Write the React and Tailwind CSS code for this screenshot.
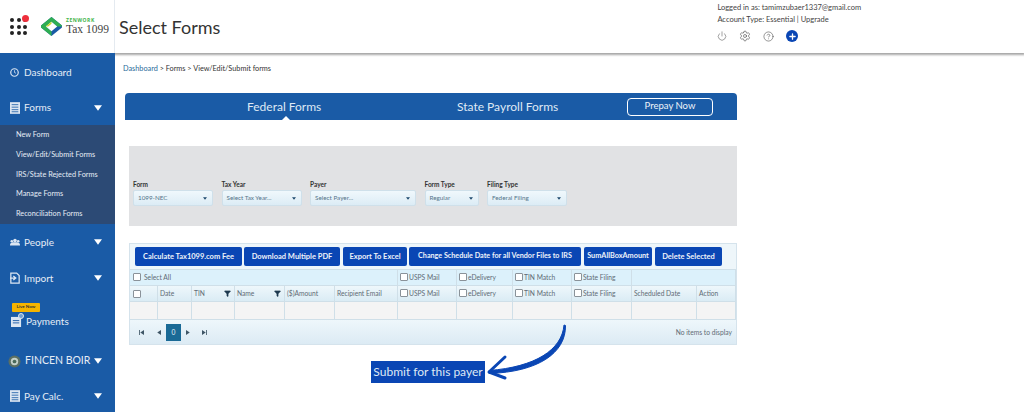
import React from "react";
import { Power, Settings, CircleHelp, Plus, Filter } from "lucide-react";

const Caret = ({ className = "" }) => (
  <svg viewBox="0 0 12 8" className={className}><path d="M0 0h12L6 8z" fill="currentColor" /></svg>
);

const Logo = () => (
  <div className="flex items-center gap-[4px] ml-[14px]">
    <svg viewBox="0 0 22 20" className="w-[21px] h-[19px]">
      <path d="M11 0 22 9v2L11 20 0 11V9z" fill="#1a5ba6" />
      <path d="M11 0 22 9v1l-5 0-6-5-6 5 6 5v5L0 11V9z" fill="#2fae52" />
      <path d="M5 10l6-5v3.500L8 10z" fill="#c6d82e" />
      <path d="M11 5l6 5-6 5-6-5z" fill="#fff" />
      <path d="M5 10l6-5v2l-3.500 3z" fill="#c6d82e" />
    </svg>
    <div className="flex flex-col leading-none">
      <span className="text-[5px] font-bold tracking-[0.5px] text-[#3fb54a] font-['Open_Sans',sans-serif] whitespace-nowrap">ZENWORK</span>
      <span className="text-[11.5px] text-[#444] font-['Liberation_Serif',serif] mt-[1px] whitespace-nowrap">Tax 1099</span>
    </div>
  </div>
);

const DocIcon = () => (
  <svg viewBox="0 0 12 14" className="w-[10px] h-[12px]">
    <path d="M0 0h12v14H0z" fill="#dce6f2" />
    <path d="M2 3h8M2 6h8M2 9h8M2 11.500h8" stroke="#1a5ba6" strokeWidth="1" />
  </svg>
);

const Item = ({ h, icon, label, caret, top }) => (
  <div className={`relative flex items-center pl-[10px] shrink-0 text-[#e6edf6] text-[10px] ${h}`}>
    {top}
    <span className="w-[14px] flex justify-start shrink-0">{icon}</span>
    <span className="whitespace-nowrap">{label}</span>
    {caret && <Caret className="w-[8px] h-[6px] text-white ml-auto mr-[13px]" />}
  </div>
);

const Check = ({ label, wide }) => (
  <span className="flex items-center whitespace-nowrap">
    <span className="w-[8px] h-[8px] bg-white border border-[#8a9299] rounded-[1px] shrink-0" />
    {label && <span className={wide ? "ml-[3px]" : "ml-[1px]"}>{label}</span>}
  </span>
);

const Field = ({ label, value, w }) => (
  <div className={`flex flex-col ${w}`}>
    <span className="text-[6.5px] font-bold text-[#333] leading-[9px] mb-[1px]">{label}</span>
    <div className="h-[16px] rounded-[2px] border border-[#cfe0ea] bg-gradient-to-b from-[#f0f8fc] to-[#dcecf5] flex items-center justify-between pl-[4px] pr-[5px] text-[6.3px] text-[#55758a]">
      <span className="whitespace-nowrap">{value}</span>
      <Caret className="w-[4px] h-[3px] text-[#1f4a6e]" />
    </div>
  </div>
);

const cols = "grid grid-cols-[28px_34px_43px_50px_50px_63px_59px_56px_59px_60px_65px_39px]";

const Btn = ({ w, children }) => (
  <div className={`h-[19px] ${w} bg-[#0a46b4] rounded-[2px] flex items-center justify-center text-[#eef3fa] font-bold whitespace-nowrap shrink-0`}>{children}</div>
);

const Cell = ({ children, span = "", cls = "" }) => (
  <div className={`border-r border-b border-[#cfdfe8] flex items-center px-[2px] min-w-0 ${span} ${cls}`}>{children}</div>
);

const Submenu = ["New Form", "View/Edit/Submit Forms", "IRS/State Rejected Forms", "Manage Forms", "Reconciliation Forms"];

const Pg = ({ d, cls }) => (
  <svg viewBox="0 0 6 6" className={`w-[5px] h-[5px] shrink-0 ${cls}`}><path d={d} fill="#3f5666" /></svg>
);

export default function App() {
  return (
    <div className="relative w-[1024px] h-[412px] overflow-hidden bg-white flex flex-col font-['Lato','Open_Sans',sans-serif]">
      <header className="relative h-[53px] shrink-0 flex bg-white shadow-[0_1px_2px_1px_rgba(0,0,0,0.35)]">
        <div className="w-[115px] shrink-0 flex items-center border-r border-[#e4eaf0] pl-[10px]">
          <div className="relative grid grid-cols-3 gap-[2.5px] w-[17px]">
            {Array.from({ length: 9 }).map((_, i) => (
              <span key={i} className="w-[4px] h-[4px] rounded-full bg-[#222]" />
            ))}
            <span className="absolute -top-[3px] -right-[2px] w-[7px] h-[7px] rounded-full bg-[#ee2f3c]" />
          </div>
          <Logo />
        </div>
        <h1 className="ml-[4px] mt-[16px] text-[18px] leading-[22px] text-[#333]">Select Forms</h1>
        <div className="ml-[497px] pt-[2px] text-[#444] text-[7.5px] leading-[12px]">
          <div className="whitespace-nowrap">Logged in as: tamimzubaer1337@gmail.com</div>
          <div className="whitespace-nowrap">Account Type: Essential | Upgrade</div>
          <div className="flex items-center gap-[12px] mt-[4px] text-[#444]">
            <Power size={10} strokeWidth={1.2} />
            <Settings size={12} strokeWidth={1.2} />
            <CircleHelp size={11} strokeWidth={1.2} />
            <span className="w-[12px] h-[12px] rounded-full bg-[#0a46b4] flex items-center justify-center">
              <Plus size={9} strokeWidth={3.5} className="text-white" />
            </span>
          </div>
        </div>
      </header>

      <div className="flex flex-1 min-h-0">
        <aside className="relative z-10 w-[115px] shrink-0 bg-[#1a5ba6] flex flex-col">
          <Item h="h-[37px] pt-[1px]" label="Dashboard" icon={
            <svg viewBox="0 0 12 12" className="w-[9px] h-[9px]"><circle cx="6" cy="6" r="5" fill="none" stroke="#dce6f2" strokeWidth="1.600" /><path d="M6 3v3l2 1" stroke="#dce6f2" fill="none" /></svg>
          } />
          <Item h="h-[35px]" label="Forms" caret icon={<DocIcon />} />
          <nav className="h-[99px] shrink-0 bg-[#2c4a75] flex flex-col justify-center pt-[1px] pl-[16px] text-[#e6edf6] text-[7.3px]">
            {Submenu.map((s) => (
              <div key={s} className="h-[19.6px] flex items-center whitespace-nowrap">{s}</div>
            ))}
          </nav>
          <Item h="h-[36px]" label="People" caret icon={
            <svg viewBox="0 0 14 10" className="w-[10px] h-[8px]"><circle cx="7" cy="3" r="2.500" fill="#dce6f2" /><circle cx="2.500" cy="4" r="1.800" fill="#dce6f2" /><circle cx="11.500" cy="4" r="1.800" fill="#dce6f2" /><path d="M0 9c0-3 3-3.500 7-3.500s7 .5 7 3.500v1H0z" fill="#dce6f2" /></svg>
          } />
          <Item h="h-[36px]" label="Import" caret icon={
            <svg viewBox="0 0 12 14" className="w-[10px] h-[12px]"><path d="M1 1h7l3 3v9H1z" fill="none" stroke="#dce6f2" strokeWidth="1.500" /><path d="M0 7h6M4 4.500 7 7l-3 2.500" fill="none" stroke="#dce6f2" strokeWidth="1.500" /></svg>
          } />
          <Item h="h-[48px] pt-[2px]" label={<span className="ml-[2px]">Payments</span>} icon={
            <span className="relative block w-[12px] h-[12px] mt-[2px] ml-[1px]">
              <svg viewBox="0 0 12 12" className="w-[11px] h-[11px]"><path d="M0 1h11v11H0z" fill="#dce6f2" /><path d="M2 5h7M2 7.500h7" stroke="#1a5ba6" /></svg>
              <span className="absolute -top-[3px] left-[7px] w-[6px] h-[6px] rounded-full bg-[#6f9fd4] border border-[#dce6f2]" />
            </span>
          } top={
            <span className="absolute left-[12px] top-[7px] h-[9px] w-[28px] bg-[#f5b400] rounded-[1px] text-[4.5px] font-bold text-[#333] flex items-center justify-center whitespace-nowrap">Live Now</span>
          } />
          <Item h="h-[34px]" label={<span className="ml-[1px] text-[10.5px]">FINCEN BOIR</span>} caret icon={
            <svg viewBox="0 0 14 14" className="w-[13px] h-[13px] -ml-[2px]"><circle cx="7" cy="7" r="6.500" fill="#5b6f63" /><circle cx="7" cy="7" r="4" fill="#c3d0c8" /><circle cx="7" cy="7" r="2" fill="#4a6a5a" /></svg>
          } />
          <Item h="h-[36px]" label="Pay Calc." caret icon={<DocIcon />} />
        </aside>

        <main className="flex-1 min-w-0 pl-[8px] pt-[10px]">
          <div className="text-[7.3px] leading-[11px] text-[#333] whitespace-nowrap">
            <span className="text-[#2a6a9a]">Dashboard</span> &gt; Forms &gt; View/Edit/Submit forms
          </div>
          <div className="relative ml-[2px] mt-[19px] w-[612px] h-[27px] bg-[#1a5ba6] rounded-t-[4px] text-white flex items-center">
            <span className="absolute left-[122px] text-[12px] whitespace-nowrap text-[#dfe9f5]">Federal Forms</span>
            <span className="absolute left-[332px] text-[12px] whitespace-nowrap text-[#dfe9f5]">State Payroll Forms</span>
            <span className="absolute left-[502px] w-[86px] h-[18px] rounded-[4px] border border-white flex items-center justify-center text-[9.5px] text-[#eef3fa]">Prepay Now</span>
            <span className="absolute left-[157px] bottom-0 w-0 h-0 border-x-[4px] border-x-transparent border-b-[4px] border-b-white" />
          </div>

          <section className="ml-[6px] mt-[26px] w-[608px] h-[80px] bg-[#e1e2e4] flex items-start gap-[8.5px] pl-[4px] pt-[34px]">
            <Field label="Form" value="1099-NEC" w="w-[80px]" />
            <Field label="Tax Year" value="Select Tax Year..." w="w-[80px]" />
            <Field label="Payer" value="Select Payer..." w="w-[106px]" />
            <Field label="Form Type" value="Regular" w="w-[54px]" />
            <Field label="Filing Type" value="Federal Filing" w="w-[80px]" />
          </section>

          <section className="ml-[6px] mt-[17px] w-[608px] h-[102px] border border-[#d5e3ec] bg-[#eef6fa] flex flex-col text-[6.7px] text-[#5f6b75]">
            <div className="h-[25px] shrink-0 flex items-center gap-[2px] pl-[5px] text-[7.500px]">
              <Btn w="w-[107px]">Calculate Tax1099.com Fee</Btn>
              <Btn w="w-[96px]">Download Multiple PDF</Btn>
              <span className="w-[1px] -mx-[1px]" />
              <Btn w="w-[64px]">Export To Excel</Btn>
              <Btn w="w-[172px] text-[7.200px]">Change Schedule Date for all Vendor Files to IRS</Btn>
              <span className="w-[1px] -mx-[1px]" />
              <Btn w="w-[68px] text-[7.300px]">SumAllBoxAmount</Btn>
              <span className="w-[1px] -mx-[1px]" />
              <Btn w="w-[67px]">Delete Selected</Btn>
            </div>
            <div className={`${cols} h-[17px] shrink-0 bg-[#dcf1fb] border-t border-[#cfdfe8]`}>
              <Cell span="col-span-6" cls="pl-[3px]"><Check wide label="Select All" /></Cell>
              <Cell><Check label="USPS Mail" /></Cell>
              <Cell><Check label="eDelivery" /></Cell>
              <Cell><Check label="TIN Match" /></Cell>
              <Cell><Check label="State Filing" /></Cell>
              <Cell span="col-span-2" />
            </div>
            <div className={`${cols} h-[16px] shrink-0 bg-gradient-to-b from-[#eef7fb] to-[#d9ebf4]`}>
              <Cell cls="pl-[3px]"><Check /></Cell>
              <Cell>Date</Cell>
              <Cell cls="justify-between">TIN<Filter size={7} fill="#1f3a50" className="text-[#1f3a50] mr-[1px]" /></Cell>
              <Cell cls="justify-between">Name<Filter size={7} fill="#1f3a50" className="text-[#1f3a50] mr-[1px]" /></Cell>
              <Cell><span className="whitespace-nowrap">($)Amount</span></Cell>
              <Cell><span className="whitespace-nowrap">Recipient Email</span></Cell>
              <Cell><Check label="USPS Mail" /></Cell>
              <Cell><Check label="eDelivery" /></Cell>
              <Cell><Check label="TIN Match" /></Cell>
              <Cell><Check label="State Filing" /></Cell>
              <Cell><span className="whitespace-nowrap">Scheduled Date</span></Cell>
              <Cell>Action</Cell>
            </div>
            <div className={`${cols} h-[18px] shrink-0 bg-[#f4f4f4]`}>
              {Array.from({ length: 12 }).map((_, i) => <Cell key={i} />)}
            </div>
            <div className="flex-1 flex items-center bg-gradient-to-b from-[#eef7fb] to-[#dcebf4] pl-[9px] pr-[4px]">
              <div className="flex items-center">
                <Pg d="M0 0h1v6H0zM6 0v6L1.500 3z" cls="mr-[12px]" />
                <Pg d="M6 0v6L1.500 3z" cls="mr-[5px]" />
                <span className="w-[15px] h-[17px] bg-[#1a6a96] text-[#e6f2f8] text-[6.7px] flex items-center justify-center">0</span>
                <Pg d="M0 0v6L4.500 3z" cls="ml-[5px]" />
                <Pg d="M0 0v6L4.500 3zM5 0h1v6H5z" cls="ml-[11px]" />
              </div>
              <span className="ml-auto whitespace-nowrap">No items to display</span>
            </div>
          </section>

          <div className="ml-[248px] mt-[16px] w-[114px] h-[22px] bg-[#0a46b4] flex items-center justify-center text-[12px] text-[#dfe9f5] whitespace-nowrap">Submit for this payer</div>
        </main>
      </div>

      <svg viewBox="0 0 90 60" className="absolute left-[480px] top-[320px] w-[90px] h-[60px]" fill="none">
        <path d="M84 5C82 30 55 47 9 50.500L9 53.500C58 52 86 33 85.500 5.500Z" fill="#0a46b4" stroke="#0a46b4" strokeWidth="1" strokeLinejoin="round" />
        <path d="M25 37 9 52l16 6" stroke="#0a46b4" strokeWidth="3" strokeLinecap="round" strokeLinejoin="round" />
      </svg>
    </div>
  );
}
